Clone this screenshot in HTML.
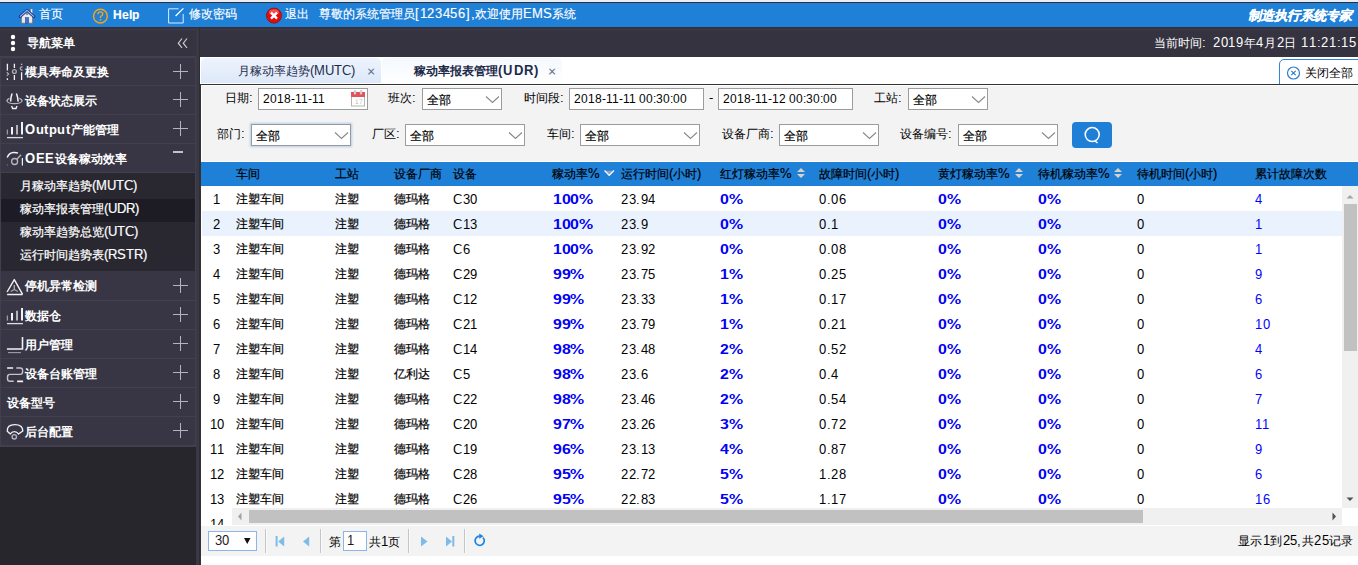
<!DOCTYPE html>
<html><head><meta charset="utf-8">
<style>
@font-face{font-family:"Liberation Sans";src:local("Liberation Sans");unicode-range:U+0020-007E,U+00D7;size-adjust:108.33%}
@font-face{font-family:"Liberation Sans";src:local("Liberation Sans Bold");font-weight:bold;unicode-range:U+0020-007E,U+00D7;size-adjust:108.33%}
*{box-sizing:border-box;margin:0;padding:0}
html,body{width:1358px;height:565px;overflow:hidden;background:#fff;font-family:"Liberation Sans",sans-serif;font-size:12px;color:#222}
.a{position:absolute}
svg{position:absolute;overflow:visible}
.t{position:absolute;line-height:14px;white-space:nowrap}
#hdr .t{color:#fff;font-size:12px}
.mi{position:absolute;left:1px;width:194px;height:28px;background:#383644;color:#fff;font-weight:bold;font-size:12px}
.mi .tx{position:absolute;left:24px;top:8px;line-height:14px;white-space:nowrap}
.pl{position:absolute;left:172px;top:6px;width:15px;height:15px}
.pl:before{content:"";position:absolute;left:0;top:7px;width:15px;height:1px;background:#b5b4ba}
.pl:after{content:"";position:absolute;left:7px;top:0;width:1px;height:15px;background:#b5b4ba}
.si{position:absolute;left:20px;color:#fff;font-size:12px;line-height:14px;white-space:nowrap}
.tab{position:absolute;top:58px;height:25px;border-radius:5px 5px 0 0}
.tab .tt{position:absolute;top:6px;line-height:14px;font-size:12px;color:#1c2a48;white-space:nowrap}
.tab .x{position:absolute;top:6px;line-height:14px;font-size:13px;color:#60708c}
.lb{position:absolute;line-height:14px;font-size:12px;color:#000;white-space:nowrap}
.inp{position:absolute;height:22px;background:#fff;border:1px solid #9c9c9c}
.inp .v{position:absolute;left:4px;top:3px;line-height:14px;font-size:11.5px;color:#000;white-space:nowrap}
.inp .cj{left:4px;top:4px;font-size:12px}
.th{position:absolute;top:167px;line-height:14px;font-size:12px;color:#000;white-space:nowrap}
.tr{position:absolute;left:202px;width:1140px;height:25px;overflow:hidden}
.c{position:absolute;top:7px;line-height:14px;font-size:12px;letter-spacing:0.5px;color:#000;white-space:nowrap}
.cj{position:absolute;top:6px;line-height:14px;font-size:12px;color:#000;white-space:nowrap}
.c.num{left:0;width:30px;text-align:center}
.c.b{font-weight:bold;color:#0000f5;letter-spacing:0;transform:scaleX(1.22);transform-origin:0 0}
.c.bl{color:#0000ff}
.sep{position:absolute;top:529px;width:2px;height:24px;background:#c6c6c6;border-right:1px solid #fafafa}

.cj,.lb,.th,.si,#hdr .t,.tab .tt,.inp .cj{font-weight:500}
.cj,.th{-webkit-text-stroke:0.2px #000}
.si{-webkit-text-stroke:0.2px #fff}
#hdr .t{-webkit-text-stroke:0.15px #fff}

</style></head><body>
<div class="a" style="left:0;top:0;width:1358px;height:2px;background:#e9ecf3"></div>
<div class="a" style="left:0;top:2px;width:1358px;height:1px;background:#2f2f38"></div>
<div class="a" id="hdr" style="left:0;top:3px;width:1358px;height:24px;background:#1f80d8">
  <svg style="left:0;top:0" width="1" height="1">
    <!-- home -->
    <rect x="30.6" y="6" width="1.8" height="5" fill="#f4efe6" stroke="#8a7a66" stroke-width="0.4"/>
    <path d="M21.4 13.2 L27 8.4 L32.6 13.2 L32.6 20.2 L21.4 20.2 Z" fill="#ebe9e6" stroke="#6f6456" stroke-width="0.7"/>
    <rect x="26" y="10.2" width="2" height="1.8" fill="#8d8a86"/>
    <rect x="25.3" y="14.6" width="3.4" height="5.6" fill="#3f73d2" stroke="#23409a" stroke-width="0.5"/>
    <polyline points="20,13.6 27,7.4 34,13.6" fill="none" stroke="#1c3a94" stroke-width="2.8" stroke-linejoin="round" stroke-linecap="round"/>
    <polyline points="20,13.6 27,7.4 34,13.6" fill="none" stroke="#9cc0f2" stroke-width="1.1" stroke-linejoin="round"/>
    <!-- help -->
    <circle cx="100.4" cy="13.2" r="6.9" fill="none" stroke="#f5a31a" stroke-width="1.5"/>
    <path d="M97.9 11.2 Q98 8.8 100.4 8.8 Q102.8 8.8 102.8 11 Q102.8 12.5 100.5 13.6 L100.5 15" fill="none" stroke="#f5a31a" stroke-width="1.3"/>
    <circle cx="100.5" cy="16.9" r="0.9" fill="#f5a31a"/>
    <!-- edit -->
    <polyline points="178.6,5.8 168.6,5.8 168.6,20 183.2,20 183.2,11" fill="none" stroke="#fff" stroke-width="1" stroke-opacity="0.85"/>
    <line x1="175.6" y1="13" x2="183.4" y2="5.4" stroke="#fff" stroke-width="1.3"/>
    <!-- exit -->
    <circle cx="274" cy="12.6" r="7.6" fill="#e30b0b" stroke="#7a0a0a" stroke-width="0.6"/>
    <ellipse cx="274" cy="9.2" rx="5" ry="3" fill="#ff8d8d" opacity="0.55"/>
    <path d="M271 9.6 L277 15.6 M277 9.6 L271 15.6" stroke="#fff" stroke-width="2.4"/>
  </svg>
  <div class="t" style="left:39px;top:4px">首页</div>
  <div class="t" style="left:113px;top:5px;font-weight:bold;font-size:11px">Help</div>
  <div class="t" style="left:189px;top:4px">修改密码</div>
  <div class="t" style="left:285px;top:4px">退出</div>
  <div class="t" style="left:319px;top:4px">尊敬的系统管理员<span style="letter-spacing:0.7px">[123456],</span>欢迎使用EMS系统</div>
  <div class="t" style="left:1248px;top:5px;font-weight:bold;font-style:italic;font-size:13.2px">制造执行系统专家</div>
</div>
<div class="a" style="left:0;top:27px;width:1358px;height:1px;background:#382e38"></div>
<div class="a" style="left:0;top:28px;width:1358px;height:29px;background:#35333f"></div>
<div class="a" style="left:0;top:29px;width:1358px;height:1px;background:#3d3b48"></div>
<div class="t" style="left:1154px;top:36px;color:#fff">当前时间:</div>
<div class="t" style="left:1213px;top:36px;color:#fff;letter-spacing:0.65px">2019年4月2日 11:21:15</div>
<!-- sidebar -->
<div class="a" style="left:0;top:56px;width:200px;height:509px;background:#27262d"></div>
<div class="a" style="left:0;top:56px;width:196px;height:391px;background:#42404c"></div>
<div class="a" style="left:196px;top:28px;width:3px;height:537px;background:#3a3845"></div>
<div class="a" style="left:199px;top:28px;width:1px;height:537px;background:#2e2d36"></div>
<svg style="left:0;top:0" width="1" height="1">
  <circle cx="13" cy="37" r="2.2" fill="#fff"/><circle cx="13" cy="43" r="2.2" fill="#fff"/><circle cx="13" cy="49" r="2.2" fill="#fff"/>
  <polyline points="182,38.5 178.3,43.2 182,48" fill="none" stroke="#d0d0d4" stroke-width="1.2"/>
  <polyline points="187,38.5 183.3,43.2 187,48" fill="none" stroke="#d0d0d4" stroke-width="1.2"/>
</svg>
<div class="t" style="left:27px;top:36px;color:#fff;font-weight:bold;font-size:12px">导航菜单</div>

<div class="mi" style="top:58px;height:27px"><div class="tx" style="top:7px">模具寿命及更换</div><div class="pl" style="top:6px"></div></div>
<div class="mi" style="top:86px"><div class="tx">设备状态展示</div><div class="pl"></div></div>
<div class="mi" style="top:115px"><div class="tx"><span style="letter-spacing:0.6px">Output</span>产能管理</div><div class="pl"></div></div>
<div class="mi" style="top:144px"><div class="tx"><span style="letter-spacing:0.6px">OEE</span>设备稼动效率</div><div class="a" style="left:171.7px;top:7px;width:10.5px;height:2px;background:#c2c1c6"></div></div>
<div class="a" style="left:1px;top:173px;width:194px;height:98px;background:#292831"></div>
<div class="a" style="left:1px;top:199px;width:194px;height:23px;background:#1d1c24"></div>
<div class="si" style="top:179px">月稼动率趋势(MUTC)</div>
<div class="si" style="top:202px">稼动率报表管理(UDR)</div>
<div class="si" style="top:225px">稼动率趋势总览(UTC)</div>
<div class="si" style="top:248px">运行时间趋势表(RSTR)</div>
<div class="mi" style="top:271px;height:29px"><div class="tx" style="top:8px">停机异常检测</div><div class="pl" style="top:7px"></div></div>
<div class="mi" style="top:301px"><div class="tx">数据仓</div><div class="pl"></div></div>
<div class="mi" style="top:330px"><div class="tx">用户管理</div><div class="pl"></div></div>
<div class="mi" style="top:359px"><div class="tx">设备台账管理</div><div class="pl"></div></div>
<div class="mi" style="top:388px"><div class="tx" style="left:6px">设备型号</div><div class="pl"></div></div>
<div class="mi" style="top:417px"><div class="tx">后台配置</div><div class="pl"></div></div>
<svg style="left:0;top:0" width="1" height="1" fill="none" stroke="#f2f2f4" stroke-width="1.3">
  <!-- sliders -->
  <path d="M7.4 63.8v6.8M7.4 78.3v1.8M14.4 63.8v4.2M14.4 75v5M21.6 63.8v1M21.6 72.3v7.8"/>
  <path d="M6.8 72.3l1.8 1.8l-1.8 1.8" stroke="#a8a7ad"/>
  <circle cx="14.4" cy="71.5" r="1.9" stroke="#a8a7ad" stroke-width="1.4"/>
  <path d="M22.6 67.2a1.5 1.5 0 1 0 0 2.6" stroke="#a8a7ad" stroke-width="1.4"/>
  <!-- lamp -->
  <path d="M12.1 93.5 Q10.7 97 10.6 101.6M16.4 93.5 Q17.9 97 18.2 101.6" stroke-width="1.5"/>
  <path d="M9.5 98.4 Q6.8 99.4 7 101 Q7.5 103.6 14.4 103.6 Q21.5 103.6 22 101 Q22.2 99.4 19.3 98.4" stroke="#b5b4ba" stroke-width="1.3"/>
  <path d="M11.6 106 L12.6 108.5 L16 108.5 L17 106" stroke-width="1.4"/>
  <!-- bars -->
  <path d="M7.4 129.6v4.9" stroke="#9d9ca3" stroke-width="1.3"/>
  <path d="M12 127v7.5M22 122.1v12.4" stroke-width="2"/>
  <path d="M17 124.9v9.6" stroke="#b3b2b8" stroke-width="2"/>
  <path d="M7 137.6h16" stroke="#dddce0" stroke-width="1.3"/>
  <!-- gauge -->
  <path d="M7.2 157.5 Q9 152.6 13.5 152.4 Q16.5 152.3 18 153.2" stroke-width="1.5"/>
  <circle cx="14.6" cy="161.5" r="3" stroke="#b8b7bd" stroke-width="1.3"/>
  <path d="M16.8 159.2 L21.1 154.7" stroke="#b8b7bd" stroke-width="1.3"/>
  <path d="M22.4 158v7.6" stroke-width="1.2"/>
  <circle cx="7.3" cy="165" r="0.5" fill="#9d9ca3" stroke="none"/>
  <!-- triangle -->
  <path d="M7.1 292 L14.3 279.6 L22.6 294.4 M7.1 294.5 H22.6" stroke-width="1.4" stroke-linejoin="round"/>
  <path d="M14.3 285v4.5M14.3 289.5l-3.6 2M14.3 289.5l3.6 2" stroke="#a8a7ad" stroke-width="1.4"/>
  <!-- bars2 -->
  <path d="M7.4 315.5v5.1" stroke="#9d9ca3" stroke-width="1.3"/>
  <path d="M12 313v7.6M22 308v12.6" stroke-width="2"/>
  <path d="M17 310.8v9.8" stroke="#b3b2b8" stroke-width="2"/>
  <path d="M7 323.6h16" stroke="#dddce0" stroke-width="1.3"/>
  <!-- user -->
  <path d="M6.9 349h15.6v-12" stroke-width="1.6"/>
  <path d="M8 352.6h13" stroke="#a09fa6" stroke-width="1.1"/>
  <!-- link -->
  <path d="M7.1 368h6M17.1 381.4h6" stroke-width="1.6"/>
  <path d="M16.3 368h4q2.3 0 2.3 2.3v1.5q0 2.5 -2.5 2.6h-8M12.1 374.4h-2.1q-2.5 0 -2.5 2.5v1.8q0 2.6 2.6 2.6h3.6" stroke="#c4c3c8" stroke-width="1.4"/>
  <!-- wifi -->
  <path d="M7.3 431.3 Q6.8 424.6 14.8 424.6 Q22.8 424.6 22.8 431 L18.5 434 Q17 431.6 14.3 431.6 Q11.8 431.6 10.3 434 Z" stroke-width="1.4" stroke-linejoin="round"/>
  <circle cx="14.3" cy="436.8" r="2.2" stroke="#b5b4ba" stroke-width="1.4"/>
</svg>

<!-- main -->
<div class="a" style="left:200px;top:57px;width:1158px;height:27px;background:#fff"></div>
<div class="tab" style="left:201px;width:180px;background:linear-gradient(#eef4fd,#dce8f9)"><span class="tt" style="left:37px">月稼动率趋势(MUTC)</span><span class="x" style="left:166px">×</span></div>
<div class="tab" style="left:382px;width:180px;background:linear-gradient(#f4f8fe,#ffffff)"><span class="tt" style="left:32px;font-weight:bold">稼动率报表管理<span style="letter-spacing:1.3px">(UDR)</span></span><span class="x" style="left:166px">×</span></div>
<div class="a" style="left:1279px;top:59px;width:90px;height:26px;border:1px solid #2f86d6;border-radius:5px 0 0 0;background:#fff"></div>
<svg style="left:0;top:0" width="1" height="1">
  <circle cx="1293.5" cy="73" r="6" fill="none" stroke="#2a7fd0" stroke-width="1.2"/>
  <path d="M1291.3 70.8l4.4 4.4M1295.7 70.8l-4.4 4.4" stroke="#2a7fd0" stroke-width="1.2"/>
</svg>
<span class="lb" style="left:1305px;top:66px">关闭全部</span>
<div class="a" style="left:200px;top:84px;width:1158px;height:1px;background:#333"></div>

<div class="a" style="left:200px;top:85px;width:1158px;height:76px;background:#f3f3f3"></div>
<div class="a" style="left:201px;top:85px;width:1157px;height:1px;background:#fff"></div>
<div class="a" style="left:200px;top:85px;width:1px;height:480px;background:#333"></div>
<div class="a" style="left:201px;top:86px;width:1px;height:75px;background:#fff"></div>

<span class="lb" style="left:225px;top:91px">日期:</span>
<div class="inp" style="left:258px;top:88px;width:110px"><span class="v">2018-11-11</span></div>
<svg style="left:0;top:0" width="1" height="1">
  <rect x="351.5" y="92.5" width="13" height="13.5" fill="#fff" stroke="#b5b5b5" stroke-width="1"/>
  <rect x="351" y="92" width="14" height="5" fill="#e8505a"/>
  <rect x="354" y="90.5" width="2" height="4" rx="1" fill="#ddd" stroke="#aaa" stroke-width="0.5"/>
  <rect x="360" y="90.5" width="2" height="4" rx="1" fill="#ddd" stroke="#aaa" stroke-width="0.5"/>
  <text x="355" y="104" font-size="6" fill="#bbb" font-family="Liberation Sans">17</text>
</svg>
<span class="lb" style="left:388px;top:91px">班次:</span>
<div class="inp" style="left:422px;top:88px;width:80px"><span class="v cj">全部</span></div>
<span class="lb" style="left:524px;top:91px">时间段:</span>
<div class="inp" style="left:569px;top:88px;width:135px"><span class="v">2018-11-11 00:30:00</span></div>
<span class="lb" style="left:709px;top:91px">-</span>
<div class="inp" style="left:718px;top:88px;width:135px"><span class="v">2018-11-12 00:30:00</span></div>
<span class="lb" style="left:874px;top:91px">工站:</span>
<div class="inp" style="left:908px;top:88px;width:80px"><span class="v cj">全部</span></div>

<span class="lb" style="left:217px;top:127px">部门:</span>
<div class="inp" style="left:251px;top:124px;width:100px;border-color:#9a9a9a;box-shadow:0 0 2px 1px rgba(110,165,230,0.45)"><span class="v cj">全部</span></div>
<span class="lb" style="left:372px;top:127px">厂区:</span>
<div class="inp" style="left:405px;top:124px;width:120px"><span class="v cj">全部</span></div>
<span class="lb" style="left:547px;top:127px">车间:</span>
<div class="inp" style="left:580px;top:124px;width:120px"><span class="v cj">全部</span></div>
<span class="lb" style="left:722px;top:127px">设备厂商:</span>
<div class="inp" style="left:779px;top:124px;width:100px"><span class="v cj">全部</span></div>
<span class="lb" style="left:900px;top:127px">设备编号:</span>
<div class="inp" style="left:958px;top:124px;width:100px"><span class="v cj">全部</span></div>
<div class="a" style="left:1072px;top:122px;width:40px;height:26px;background:#1f7fd6;border-radius:4px"></div>
<svg style="left:0;top:0" width="1" height="1" fill="none" stroke="#fff">
  <circle cx="1092.2" cy="134.6" r="7" stroke-width="1.5"/>
  <path d="M1095 141 L1097.5 143" stroke-width="1.5"/>
  <g stroke="#888" stroke-width="1.1">
    <polyline points="486,96.5 492.5,102.5 499,96.5"/>
    <polyline points="972,96.5 978.5,102.5 985,96.5"/>
    <polyline points="335,132.5 341.5,138.5 348,132.5"/>
    <polyline points="509,132.5 515.5,138.5 522,132.5"/>
    <polyline points="684,132.5 690.5,138.5 697,132.5"/>
    <polyline points="863,132.5 869.5,138.5 876,132.5"/>
    <polyline points="1042,132.5 1048.5,138.5 1055,132.5"/>
  </g>
</svg>

<!-- table -->
<div class="a" style="left:201px;top:161px;width:1157px;height:1px;background:#fff"></div>
<div class="a" style="left:201px;top:162px;width:1157px;height:24px;background:#1f80d8"></div>
<span class="th" style="left:236px">车间</span>
<span class="th" style="left:335px">工站</span>
<span class="th" style="left:394px">设备厂商</span>
<span class="th" style="left:453px">设备</span>
<span class="th" style="left:552px">稼动率%</span>
<span class="th" style="left:621px">运行时间(小时)</span>
<span class="th" style="left:720px">红灯稼动率%</span>
<span class="th" style="left:819px">故障时间(小时)</span>
<span class="th" style="left:938px">黄灯稼动率%</span>
<span class="th" style="left:1038px">待机稼动率%</span>
<span class="th" style="left:1137px">待机时间(小时)</span>
<span class="th" style="left:1255px">累计故障次数</span>
<svg style="left:0;top:0" width="1" height="1">
  <path d="M605 170.8 L613.5 170.8 L609.2 175.5 Z" fill="#8ba3c8"/>
  <polyline points="604.5,170.5 609.2,175.5 614,170.5" fill="none" stroke="#fff" stroke-width="1.1"/>
  <g fill="#d6d1cc">
    <path d="M797 172 L801 168 L805 172 Z M797 174 L801 178 L805 174 Z"/>
    <path d="M1015 172 L1019 168 L1023 172 Z M1015 174 L1019 178 L1023 174 Z"/>
    <path d="M1114 172 L1118 168 L1122 172 Z M1114 174 L1118 178 L1122 174 Z"/>
  </g>
</svg>
<div class="tr" style="top:186px"><span class="c num">1</span><span class="cj" style="left:34px">注塑车间</span><span class="cj" style="left:133px">注塑</span><span class="cj" style="left:192px">德玛格</span><span class="c" style="left:251px">C30</span><span class="c b" style="left:351px">100%</span><span class="c" style="left:419px">23.94</span><span class="c b" style="left:518px">0%</span><span class="c" style="left:617px">0.06</span><span class="c b" style="left:736px">0%</span><span class="c b" style="left:836px">0%</span><span class="c" style="left:935px">0</span><span class="c bl" style="left:1053px">4</span></div>
<div class="tr" style="top:211px;background:#eaf2fd"><span class="c num">2</span><span class="cj" style="left:34px">注塑车间</span><span class="cj" style="left:133px">注塑</span><span class="cj" style="left:192px">德玛格</span><span class="c" style="left:251px">C13</span><span class="c b" style="left:351px">100%</span><span class="c" style="left:419px">23.9</span><span class="c b" style="left:518px">0%</span><span class="c" style="left:617px">0.1</span><span class="c b" style="left:736px">0%</span><span class="c b" style="left:836px">0%</span><span class="c" style="left:935px">0</span><span class="c bl" style="left:1053px">1</span></div>
<div class="tr" style="top:236px"><span class="c num">3</span><span class="cj" style="left:34px">注塑车间</span><span class="cj" style="left:133px">注塑</span><span class="cj" style="left:192px">德玛格</span><span class="c" style="left:251px">C6</span><span class="c b" style="left:351px">100%</span><span class="c" style="left:419px">23.92</span><span class="c b" style="left:518px">0%</span><span class="c" style="left:617px">0.08</span><span class="c b" style="left:736px">0%</span><span class="c b" style="left:836px">0%</span><span class="c" style="left:935px">0</span><span class="c bl" style="left:1053px">1</span></div>
<div class="tr" style="top:261px"><span class="c num">4</span><span class="cj" style="left:34px">注塑车间</span><span class="cj" style="left:133px">注塑</span><span class="cj" style="left:192px">德玛格</span><span class="c" style="left:251px">C29</span><span class="c b" style="left:351px">99%</span><span class="c" style="left:419px">23.75</span><span class="c b" style="left:518px">1%</span><span class="c" style="left:617px">0.25</span><span class="c b" style="left:736px">0%</span><span class="c b" style="left:836px">0%</span><span class="c" style="left:935px">0</span><span class="c bl" style="left:1053px">9</span></div>
<div class="tr" style="top:286px"><span class="c num">5</span><span class="cj" style="left:34px">注塑车间</span><span class="cj" style="left:133px">注塑</span><span class="cj" style="left:192px">德玛格</span><span class="c" style="left:251px">C12</span><span class="c b" style="left:351px">99%</span><span class="c" style="left:419px">23.33</span><span class="c b" style="left:518px">1%</span><span class="c" style="left:617px">0.17</span><span class="c b" style="left:736px">0%</span><span class="c b" style="left:836px">0%</span><span class="c" style="left:935px">0</span><span class="c bl" style="left:1053px">6</span></div>
<div class="tr" style="top:311px"><span class="c num">6</span><span class="cj" style="left:34px">注塑车间</span><span class="cj" style="left:133px">注塑</span><span class="cj" style="left:192px">德玛格</span><span class="c" style="left:251px">C21</span><span class="c b" style="left:351px">99%</span><span class="c" style="left:419px">23.79</span><span class="c b" style="left:518px">1%</span><span class="c" style="left:617px">0.21</span><span class="c b" style="left:736px">0%</span><span class="c b" style="left:836px">0%</span><span class="c" style="left:935px">0</span><span class="c bl" style="left:1053px">10</span></div>
<div class="tr" style="top:336px"><span class="c num">7</span><span class="cj" style="left:34px">注塑车间</span><span class="cj" style="left:133px">注塑</span><span class="cj" style="left:192px">德玛格</span><span class="c" style="left:251px">C14</span><span class="c b" style="left:351px">98%</span><span class="c" style="left:419px">23.48</span><span class="c b" style="left:518px">2%</span><span class="c" style="left:617px">0.52</span><span class="c b" style="left:736px">0%</span><span class="c b" style="left:836px">0%</span><span class="c" style="left:935px">0</span><span class="c bl" style="left:1053px">4</span></div>
<div class="tr" style="top:361px"><span class="c num">8</span><span class="cj" style="left:34px">注塑车间</span><span class="cj" style="left:133px">注塑</span><span class="cj" style="left:192px">亿利达</span><span class="c" style="left:251px">C5</span><span class="c b" style="left:351px">98%</span><span class="c" style="left:419px">23.6</span><span class="c b" style="left:518px">2%</span><span class="c" style="left:617px">0.4</span><span class="c b" style="left:736px">0%</span><span class="c b" style="left:836px">0%</span><span class="c" style="left:935px">0</span><span class="c bl" style="left:1053px">6</span></div>
<div class="tr" style="top:386px"><span class="c num">9</span><span class="cj" style="left:34px">注塑车间</span><span class="cj" style="left:133px">注塑</span><span class="cj" style="left:192px">德玛格</span><span class="c" style="left:251px">C22</span><span class="c b" style="left:351px">98%</span><span class="c" style="left:419px">23.46</span><span class="c b" style="left:518px">2%</span><span class="c" style="left:617px">0.54</span><span class="c b" style="left:736px">0%</span><span class="c b" style="left:836px">0%</span><span class="c" style="left:935px">0</span><span class="c bl" style="left:1053px">7</span></div>
<div class="tr" style="top:411px"><span class="c num">10</span><span class="cj" style="left:34px">注塑车间</span><span class="cj" style="left:133px">注塑</span><span class="cj" style="left:192px">德玛格</span><span class="c" style="left:251px">C20</span><span class="c b" style="left:351px">97%</span><span class="c" style="left:419px">23.26</span><span class="c b" style="left:518px">3%</span><span class="c" style="left:617px">0.72</span><span class="c b" style="left:736px">0%</span><span class="c b" style="left:836px">0%</span><span class="c" style="left:935px">0</span><span class="c bl" style="left:1053px">11</span></div>
<div class="tr" style="top:436px"><span class="c num">11</span><span class="cj" style="left:34px">注塑车间</span><span class="cj" style="left:133px">注塑</span><span class="cj" style="left:192px">德玛格</span><span class="c" style="left:251px">C19</span><span class="c b" style="left:351px">96%</span><span class="c" style="left:419px">23.13</span><span class="c b" style="left:518px">4%</span><span class="c" style="left:617px">0.87</span><span class="c b" style="left:736px">0%</span><span class="c b" style="left:836px">0%</span><span class="c" style="left:935px">0</span><span class="c bl" style="left:1053px">9</span></div>
<div class="tr" style="top:461px"><span class="c num">12</span><span class="cj" style="left:34px">注塑车间</span><span class="cj" style="left:133px">注塑</span><span class="cj" style="left:192px">德玛格</span><span class="c" style="left:251px">C28</span><span class="c b" style="left:351px">95%</span><span class="c" style="left:419px">22.72</span><span class="c b" style="left:518px">5%</span><span class="c" style="left:617px">1.28</span><span class="c b" style="left:736px">0%</span><span class="c b" style="left:836px">0%</span><span class="c" style="left:935px">0</span><span class="c bl" style="left:1053px">6</span></div>
<div class="tr" style="top:486px"><span class="c num">13</span><span class="cj" style="left:34px">注塑车间</span><span class="cj" style="left:133px">注塑</span><span class="cj" style="left:192px">德玛格</span><span class="c" style="left:251px">C26</span><span class="c b" style="left:351px">95%</span><span class="c" style="left:419px">22.83</span><span class="c b" style="left:518px">5%</span><span class="c" style="left:617px">1.17</span><span class="c b" style="left:736px">0%</span><span class="c b" style="left:836px">0%</span><span class="c" style="left:935px">0</span><span class="c bl" style="left:1053px">16</span></div>
<div class="tr" style="top:511px;height:14px"><span class="c num">14</span></div>

<div class="a" style="left:1342px;top:186px;width:16px;height:322px;background:#f0f0f0"></div>
<div class="a" style="left:1344px;top:204px;width:13px;height:147px;background:#c1c1c1"></div>
<div class="a" style="left:232px;top:508px;width:1110px;height:17px;background:#f0f0f0"></div>
<div class="a" style="left:249px;top:510px;width:894px;height:13px;background:#c1c1c1"></div>
<div class="a" style="left:1342px;top:508px;width:16px;height:17px;background:#fff"></div>
<svg style="left:0;top:0" width="1" height="1">
  <path d="M1346.5 198.5 L1350 195 L1353.5 198.5 Z" fill="#a3a3a3"/>
  <path d="M1346.5 497.5 L1350 501 L1353.5 497.5 Z" fill="#505050"/>
  <path d="M241.5 512.5 L238 516.5 L241.5 520.5 Z" fill="#a3a3a3"/>
  <path d="M1332.5 512.5 L1336 516.5 L1332.5 520.5 Z" fill="#505050"/>
</svg>

<div class="a" style="left:201px;top:526px;width:1157px;height:30px;background:#f3f3f3"></div>
<div class="a" style="left:208px;top:531px;width:49px;height:20px;background:#fff;border:1px solid #8cb5e8"></div>
<span class="t" style="left:215px;top:534px;font-size:12px;color:#1a1a1a">30</span>
<svg style="left:0;top:0" width="1" height="1">
  <path d="M244 538 L250.5 538 L247.25 544 Z" fill="#111"/>
  <g fill="#7ebbe9">
    <rect x="275.6" y="536" width="2" height="10.5"/>
    <path d="M284.2 536.5 L278.2 541.5 L284.2 546.5 Z"/>
    <path d="M309.2 536.5 L303 541.5 L309.2 546.5 Z"/>
    <path d="M421 536.5 L427.5 541.5 L421 546.5 Z"/>
    <path d="M446 536.5 L452 541.5 L446 546.5 Z"/>
    <rect x="452.3" y="536" width="2" height="10.5"/>
  </g>
  <path d="M483 537.6 A4.6 4.6 0 1 1 479.6 536.2" fill="none" stroke="#1f86e0" stroke-width="1.7"/>
  <path d="M479.2 533.6 L483.6 536.3 L479.2 538.8 Z" fill="#1f86e0"/>
</svg>
<div class="sep" style="left:265px"></div>
<div class="sep" style="left:320px"></div>
<div class="sep" style="left:408px"></div>
<div class="sep" style="left:464px"></div>
<span class="lb" style="left:329px;top:535px">第</span>
<div class="a" style="left:343px;top:531px;width:24px;height:20px;background:#fff;border:1px solid #8cb5e8"></div>
<span class="t" style="left:347px;top:534px;font-size:12px;color:#1a1a1a">1</span>
<span class="lb" style="left:369px;top:535px">共1页</span>
<span class="lb" style="left:1238px;top:534px;letter-spacing:0.4px">显示1到25,共25记录</span>

</body></html>
